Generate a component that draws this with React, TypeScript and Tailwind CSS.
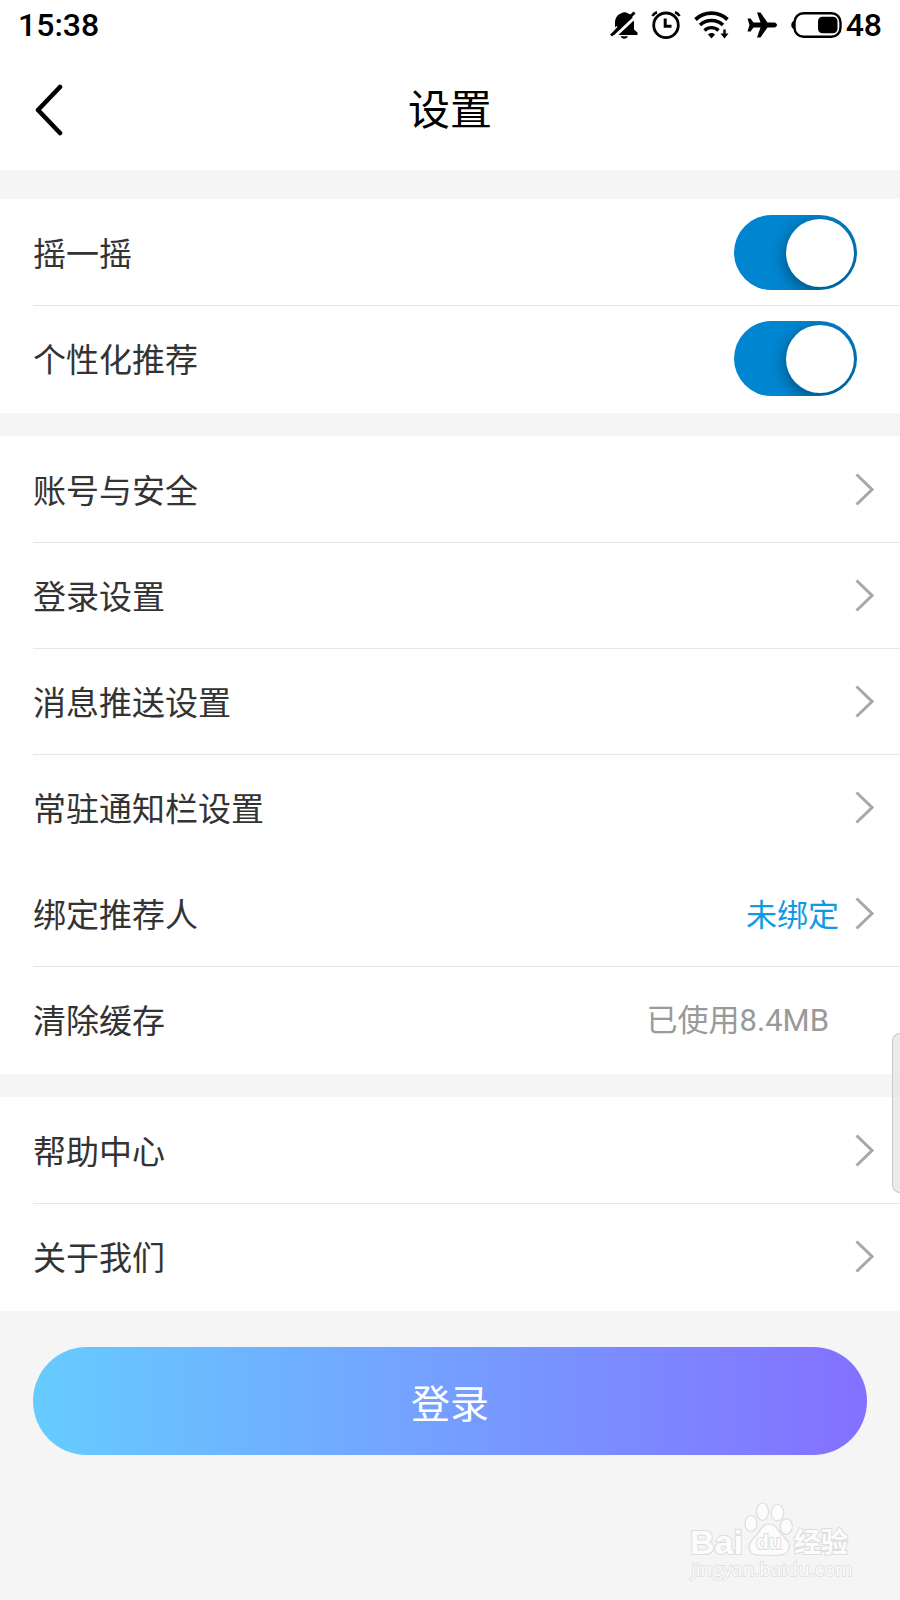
import { useState } from 'react'
import type { ReactNode } from 'react'

interface Item {
  label: string
  href: string
  value?: string
  line?: boolean
}

const mainItems: Item[] = [
  { label: '账号与安全', href: '#account', line: true },
  { label: '登录设置', href: '#login-settings', line: true },
  { label: '消息推送设置', href: '#push', line: true },
  { label: '常驻通知栏设置', href: '#notification-bar' },
  { label: '绑定推荐人', href: '#referrer', value: '未绑定', line: true },
]

const aboutItems: Item[] = [
  { label: '帮助中心', href: '#help', line: true },
  { label: '关于我们', href: '#about' },
]

function BellOffIcon() {
  return (
    <svg width="28" height="28" viewBox="0 0 28 28">
      <path
        d="M5 21V12C5 7 7.500 3.500 11.500 2.300C13 .8 16 .8 17.500 2.300C21.500 3.500 24 7 24 12V18.500L27.500 21.500V24H2Z"
        fill="#000"
      />
      <path d="M10.500 25.300H18C17 28.500 11.500 28.500 10.500 25.300Z" fill="#000" />
      <path d="M2.500 27.500L28 3.500" stroke="#fff" strokeWidth="3" />
      <path d="M1 24.500L24.500 1.500" stroke="#000" strokeWidth="3" />
      <path d="M0 22.500L7 15.600" stroke="#fff" strokeWidth="1.400" />
    </svg>
  )
}

function AlarmIcon() {
  return (
    <svg width="30" height="28" viewBox="0 0 30 28" fill="none" stroke="#000">
      <circle cx="15" cy="14.300" r="12.300" strokeWidth="2.800" />
      <path d="M14.200 7.500V15.200H20.500" strokeWidth="3" />
      <path d="M1.500 5C2.500 3 4 1.800 6 1.200M24 1.200C26 1.800 27.500 3 28.500 5" strokeWidth="2.600" />
    </svg>
  )
}

function WifiIcon() {
  return (
    <svg width="35" height="28" viewBox="0 0 35 28" fill="none" stroke="#000">
      <path d="M1.500 8.500C10.500 0 24.500 0 33.500 8.500" strokeWidth="3.800" />
      <path d="M6 14C12.500 8 22.500 8 29 14" strokeWidth="3.600" />
      <path d="M10.500 19.500C14.500 15.700 20.500 15.700 24.500 19.500" strokeWidth="3.400" />
      <path d="M14 23.500C16 21.500 19 21.500 21 23.500L17.500 27.500Z" fill="#000" stroke="none" />
      <path d="M30.500 18.500V25" strokeWidth="2.400" />
      <path d="M26.500 22.500H34.500L30.500 27.500Z" fill="#000" stroke="none" />
    </svg>
  )
}

function PlaneIcon() {
  return (
    <svg width="30" height="26" viewBox="0 0 30 26" fill="#000">
      <path d="M10 .5H13.500L20.500 10.500H27C31 11 31 15 27 15.500H20.500L13.500 25.500H10L13.500 15.500H6.500L3.500 19.500H.5L2.500 13L.5 6.500H3.500L6.500 10.500H13.500Z" />
    </svg>
  )
}

function BatteryIcon() {
  return (
    <svg width="51" height="26" viewBox="0 0 51 26">
      <path d="M3.500 8.500C-.8 10-.8 16 3.500 17.500Z" fill="#000" />
      <rect x="3.500" y="1.300" width="46" height="23.400" rx="9" fill="none" stroke="#000" strokeWidth="2.400" />
      <rect x="27" y="4.800" width="19.500" height="16.500" rx="4.500" fill="#000" />
    </svg>
  )
}

function Chevron() {
  return (
    <svg width="19" height="34" viewBox="0 0 19 34" fill="none">
      <path d="M1.500 1.500L17 16.500L1.500 31.500" stroke="#a8a8a8" strokeWidth="3" />
    </svg>
  )
}

function Watermark() {
  return (
    <svg width="166" height="88" viewBox="0 0 166 88" aria-hidden="true">
      <g fill="#fcfcfc" stroke="#dcdcdc" strokeWidth="1.200">
        <ellipse cx="64" cy="28.500" rx="6" ry="8" />
        <ellipse cx="75.500" cy="16.700" rx="6" ry="8.700" />
        <ellipse cx="90.500" cy="17.700" rx="6.300" ry="8.200" />
        <ellipse cx="99.300" cy="31.500" rx="6" ry="7.800" />
        <path d="M82 29C89.500 29 91 36 96.500 41.500C102 46.500 104 51.500 100.500 56.500C96.500 62 89.500 59.500 82 60.500C74.500 59.500 67.500 62 63.500 56.500C60 51.500 63 46.500 68.500 41.500C74 36 74.500 29 82 29Z" />
      </g>
      <g stroke="#dcdcdc" fill="#fcfcfc" strokeWidth="2" paintOrder="stroke">
        <text x="3" y="59" fontSize="34" fontWeight="700" className="font-['Liberation_Sans',sans-serif]">
          Bai
        </text>
        <text x="69" y="54" fontSize="21" fontWeight="700" className="font-['Liberation_Sans',sans-serif]">
          du
        </text>
        <text x="107" y="57" fontSize="27" fontWeight="700" className="font-['Noto_Sans_CJK_SC',sans-serif]">
          经验
        </text>
        <text x="4" y="81" fontSize="19" strokeWidth="1.500" className="font-['Open_Sans',sans-serif]">
          jingyan.baidu.com
        </text>
      </g>
    </svg>
  )
}

function Group({ children }: { children: ReactNode }) {
  return <section className="bg-white py-px">{children}</section>
}

function rowClass(line?: boolean) {
  return `ml-[33px] flex h-[106px] items-center border-b ${line ? 'border-[#e6e6e6]' : 'border-transparent'}`
}

function SwitchRow({ label, line }: { label: string; line?: boolean }) {
  const [on, setOn] = useState(true)
  return (
    <label className={`${rowClass(line)} cursor-pointer justify-between pr-[43px]`}>
      {label}
      <input
        type="checkbox"
        className="peer sr-only"
        checked={on}
        onChange={(e) => setOn(e.target.checked)}
      />
      <span className="flex h-[75px] w-[123px] items-center overflow-hidden rounded-full bg-gray-300 px-[3px] peer-checked:justify-end peer-checked:bg-[#0086d1]">
        <span className="size-[68px] rounded-full bg-white shadow-[0_4px_16px_1px_rgba(0,0,0,0.4)]" />
      </span>
    </label>
  )
}

function LinkRow({ item }: { item: Item }) {
  return (
    <a href={item.href} className={`${rowClass(item.line)} justify-between pr-[26px]`}>
      {item.label}
      <span className="flex items-center gap-4 text-[31px] text-[#109ae4]">
        {item.value}
        <Chevron />
      </span>
    </a>
  )
}

export default function App() {
  return (
    <div className="min-h-screen bg-[#f5f5f5] font-['Noto_Sans_CJK_SC',sans-serif] text-[33px] text-[#333]">
      <div className="bg-white font-[Roboto,'Noto_Sans_CJK_SC',sans-serif] text-black">
        <div className="flex h-[50px] items-center justify-between px-[18px] text-[32px] font-medium">
          <span>15:38</span>
          <div className="flex items-center gap-[18px]">
            <div className="flex items-center gap-[13px]">
              <BellOffIcon />
              <AlarmIcon />
              <WifiIcon />
            </div>
            <div className="flex items-center gap-[14px]">
              <PlaneIcon />
              <div className="flex items-center gap-1">
                <BatteryIcon />
                <span>48</span>
              </div>
            </div>
          </div>
        </div>
        <header className="grid h-[120px] grid-cols-[1fr_auto_1fr] items-center px-[33px]">
          <button aria-label="返回" className="justify-self-start">
            <svg width="30" height="52" viewBox="0 0 30 52" fill="none">
              <path
                d="M27 3L5 26L27 49"
                stroke="#000"
                strokeWidth="4.600"
                strokeLinecap="round"
                strokeLinejoin="round"
              />
            </svg>
          </button>
          <h1 className="text-[42px]">设置</h1>
        </header>
      </div>

      <main className="mt-[29px] flex flex-col gap-[23px]">
        <Group>
          <SwitchRow label="摇一摇" line />
          <SwitchRow label="个性化推荐" />
        </Group>

        <Group>
          {mainItems.map((item) => (
            <LinkRow key={item.href} item={item} />
          ))}
          <div className="flex flex-col">
            <button className={`${rowClass()} justify-between pr-[71px]`}>
              清除缓存
              <span className="text-[31px] text-[#999]">
                已使用<span className="font-[Roboto,sans-serif]">8.4MB</span>
              </span>
            </button>
          </div>
        </Group>

        <Group>
          {aboutItems.map((item) => (
            <LinkRow key={item.href} item={item} />
          ))}
        </Group>
      </main>

      <div className="px-[33px] pt-9">
        <button className="h-[108px] w-full rounded-full bg-linear-to-r/srgb from-[#66ccff] to-[#8470ff] text-[39px] text-white">
          登录
        </button>
      </div>

      <footer className="flex justify-end pt-10 pr-[47px]">
        <Watermark />
      </footer>

      {/* edge panel handle */}
      <div className="fixed top-[1033px] right-0 h-40 w-2 rounded-l-lg border border-r-0 border-[#c8c8c8] bg-[#e6e6e6]/80" />
    </div>
  )
}
